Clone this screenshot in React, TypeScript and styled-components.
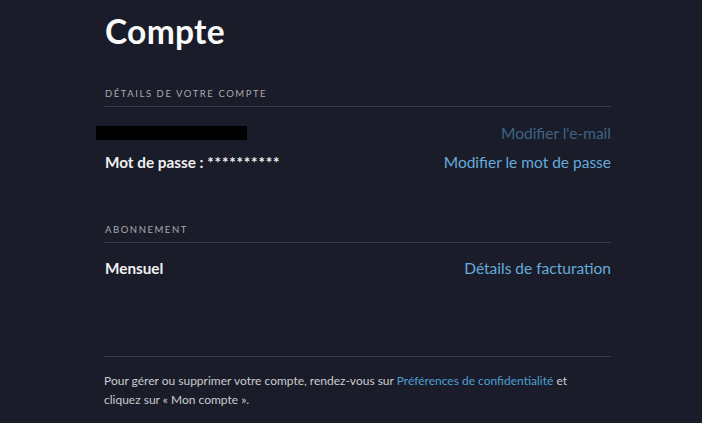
import React from "react";
import styled, { createGlobalStyle } from "styled-components";

const Global = createGlobalStyle`
  html, body { margin: 0; padding: 0; background: #1a1d29; }
  body { font-family: Lato, "Noto Sans", sans-serif; color: #f9f9f9; }
`;

const Page = styled.div`
  width: 702px;
  height: 423px;
  overflow: hidden;
  background: #1a1d29;
`;

const Column = styled.main`
  width: 507px;
  margin-left: 104px;
  display: flex;
  flex-direction: column;
`;

const Title = styled.h1`
  margin: 9px 0 0 1px;
  font-size: 33.5px;
  line-height: 44px;
  font-weight: 700;
  color: #f9f9f9;
  letter-spacing: 0.3px;
`;

const Section = styled.section<{ $top: number }>`
  margin-top: ${(p) => p.$top}px;
  display: flex;
  flex-direction: column;
`;

const SectionLabel = styled.h2`
  margin: 0 0 0 1px;
  font-size: 9.5px;
  line-height: 14px;
  font-weight: 400;
  letter-spacing: 1.55px;
  color: #a9abb2;
  text-transform: uppercase;
`;

const Divider = styled.hr<{ $top?: number }>`
  margin: ${(p) => p.$top ?? 5}px 0 0;
  border: 0;
  height: 1px;
  background: #3a3d49;
`;

const Row = styled.div<{ $top: number }>`
  margin-top: ${(p) => p.$top}px;
  display: flex;
  justify-content: space-between;
  align-items: center;
  height: 20px;
`;

const Value = styled.span`
  font-size: 15.3px;
  font-weight: 700;
  color: #f0f0f2;
  margin-left: 1px;
`;

const Stars = styled.span`
  letter-spacing: 0.8px;
`;

const Redaction = styled.span`
  display: block;
  width: 151px;
  height: 14px;
  background: #000;
  margin-left: -8px;
`;

const Link = styled.a<{ $dim?: boolean }>`
  font-size: 15.5px;
  color: ${(p) => (p.$dim ? "#3f6484" : "#65acdc")};
  text-decoration: none;
  cursor: pointer;
`;

const Footer = styled.p`
  margin: 14px 0 0 0;
  font-size: 12px;
  line-height: 19px;
  color: #cacbd0;
`;

const InlineLink = styled.a`
  color: #4f9fd6;
  text-decoration: none;
`;

export default function App() {
  return (
    <Page>
      <Global />
      <Column>
        <Title>Compte</Title>
        <Section $top={34}>
          <SectionLabel>Détails de votre compte</SectionLabel>
          <Divider />
          <Row $top={16}>
            <Redaction />
            <Link $dim>Modifier l'e-mail</Link>
          </Row>
          <Row $top={9}>
            <Value>
              Mot de passe : <Stars>**********</Stars>
            </Value>
            <Link>Modifier le mot de passe</Link>
          </Row>
        </Section>
        <Section $top={51}>
          <SectionLabel>Abonnement</SectionLabel>
          <Divider />
          <Row $top={15}>
            <Value>Mensuel</Value>
            <Link>Détails de facturation</Link>
          </Row>
        </Section>
        <Divider $top={78} />
        <Footer>
          Pour gérer ou supprimer votre compte, rendez-vous sur{" "}
          <InlineLink>Préférences de confidentialité</InlineLink> et
          <br />
          cliquez sur « Mon compte ».
        </Footer>
      </Column>
    </Page>
  );
}
